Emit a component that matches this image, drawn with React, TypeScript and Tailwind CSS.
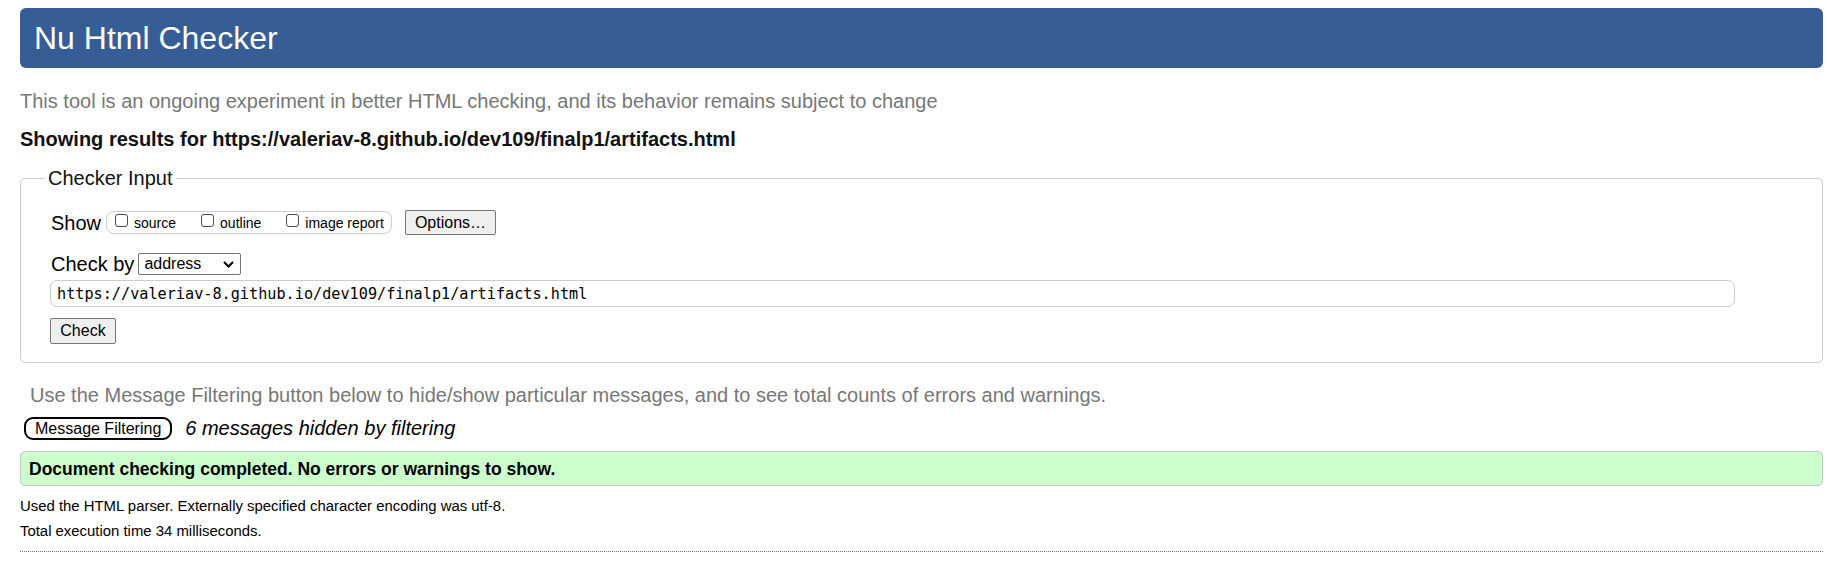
import React from 'react';

const Checkbox = ({ label }: { label: string }) => (
  <label className="flex items-center">
    <span className="inline-block w-[13px] h-[13px] border border-[#4a4a4a] rounded-[3px] bg-white mr-[6px] -mt-[4px]" />
    <span className="text-[14px] leading-[18px] text-black">{label}</span>
  </label>
);

export default function App() {
  return (
    <div className="min-h-[574px] bg-white pl-[20px] pr-[4px] pt-[8px] font-['Liberation_Sans',Arial,sans-serif] text-black">
      {/* Title bar */}
      <div className="h-[60px] bg-[#365d95] rounded-[6px] flex items-center pl-[14px]">
        <h1 className="text-[32px] leading-[36px] text-white">Nu Html Checker</h1>
      </div>

      <p className="mt-[21px] text-[20px] leading-[24px] text-[#777]">
        This tool is an ongoing experiment in better HTML checking, and its behavior remains subject to change
      </p>
      <p className="mt-[14px] text-[20px] leading-[24px] font-bold text-[#111]">
        Showing results for https://valeriav-8.github.io/dev109/finalp1/artifacts.html
      </p>

      {/* Checker input */}
      <fieldset className="mt-[15px] border border-[#ccc] rounded-[5px] pl-[24px] pb-[18px]">
        <legend className="px-[3px] text-[20px] leading-[24px] text-[#111]">Checker Input</legend>
        <div className="pl-[6px]">
          <div className="mt-[20px] flex items-center h-[25px]">
            <span className="text-[20px] leading-[24px]">Show</span>
            <div className="ml-[5px] h-[23px] flex items-center gap-[25px] border border-[#ccc] rounded-[8px] pl-[8px] pr-[7px]">
              <Checkbox label="source" />
              <Checkbox label="outline" />
              <Checkbox label="image report" />
            </div>
            <button className="ml-[13px] h-[25px] px-[9px] text-[16px] leading-[20px] bg-[#efefef] border border-[#767676] rounded-[2px]">
              Options…
            </button>
          </div>

          <div className="mt-[17px] flex items-center h-[24px]">
            <span className="text-[20px] leading-[24px]">Check by</span>
            <div className="ml-[4px] w-[103px] h-[22px] flex items-center justify-between border border-[#767676] rounded-[2px] pl-[5px] pr-[6px]">
              <span className="text-[16px] leading-[20px]">address</span>
              <svg width="11" height="7" viewBox="0 0 11 7" className="mt-[1px]">
                <path d="M1 1 L5.5 5.5 L10 1" fill="none" stroke="#000" strokeWidth="2" />
              </svg>
            </div>
          </div>

          <div className="mt-[4px] -ml-[1px] w-[1685px] h-[27px] flex items-center border border-[#ccc] rounded-[7px] pl-[6px]">
            <span className="font-['DejaVu_Sans_Mono',monospace] text-[15.2px] leading-[20px]">
              https://valeriav-8.github.io/dev109/finalp1/artifacts.html
            </span>
          </div>

          <button className="mt-[11px] -ml-[1px] h-[26px] w-[66px] text-[16px] leading-[20px] bg-[#efefef] border border-[#767676] rounded-[2px] block">
            Check
          </button>
        </div>
      </fieldset>

      <p className="mt-[20px] pl-[10px] text-[20px] leading-[24px] text-[#777]">
        Use the Message Filtering button below to hide/show particular messages, and to see total counts of errors and warnings.
      </p>

      <div className="mt-[9px] flex items-center pl-[4px]">
        <button className="h-[23px] px-[9px] text-[16px] leading-[19px] bg-white border-2 border-black rounded-[9px]">
          Message Filtering
        </button>
        <span className="ml-[13px] text-[20px] leading-[24px] italic">6 messages hidden by filtering</span>
      </div>

      <div className="mt-[11px] h-[35px] flex items-center bg-[#ccffcc] border border-[#c4c4c4] rounded-[5px] pl-[8px]">
        <p className="text-[17.5px] leading-[22px] font-bold">
          Document checking completed. No errors or warnings to show.
        </p>
      </div>

      <p className="mt-[11px] text-[14.9px] leading-[18px]">
        Used the HTML parser. Externally specified character encoding was utf-8.
      </p>
      <p className="mt-[7px] text-[14.9px] leading-[18px]">Total execution time 34 milliseconds.</p>

      <hr className="mt-[11px] border-0 border-t border-dotted border-[#777]" />
    </div>
  );
}
